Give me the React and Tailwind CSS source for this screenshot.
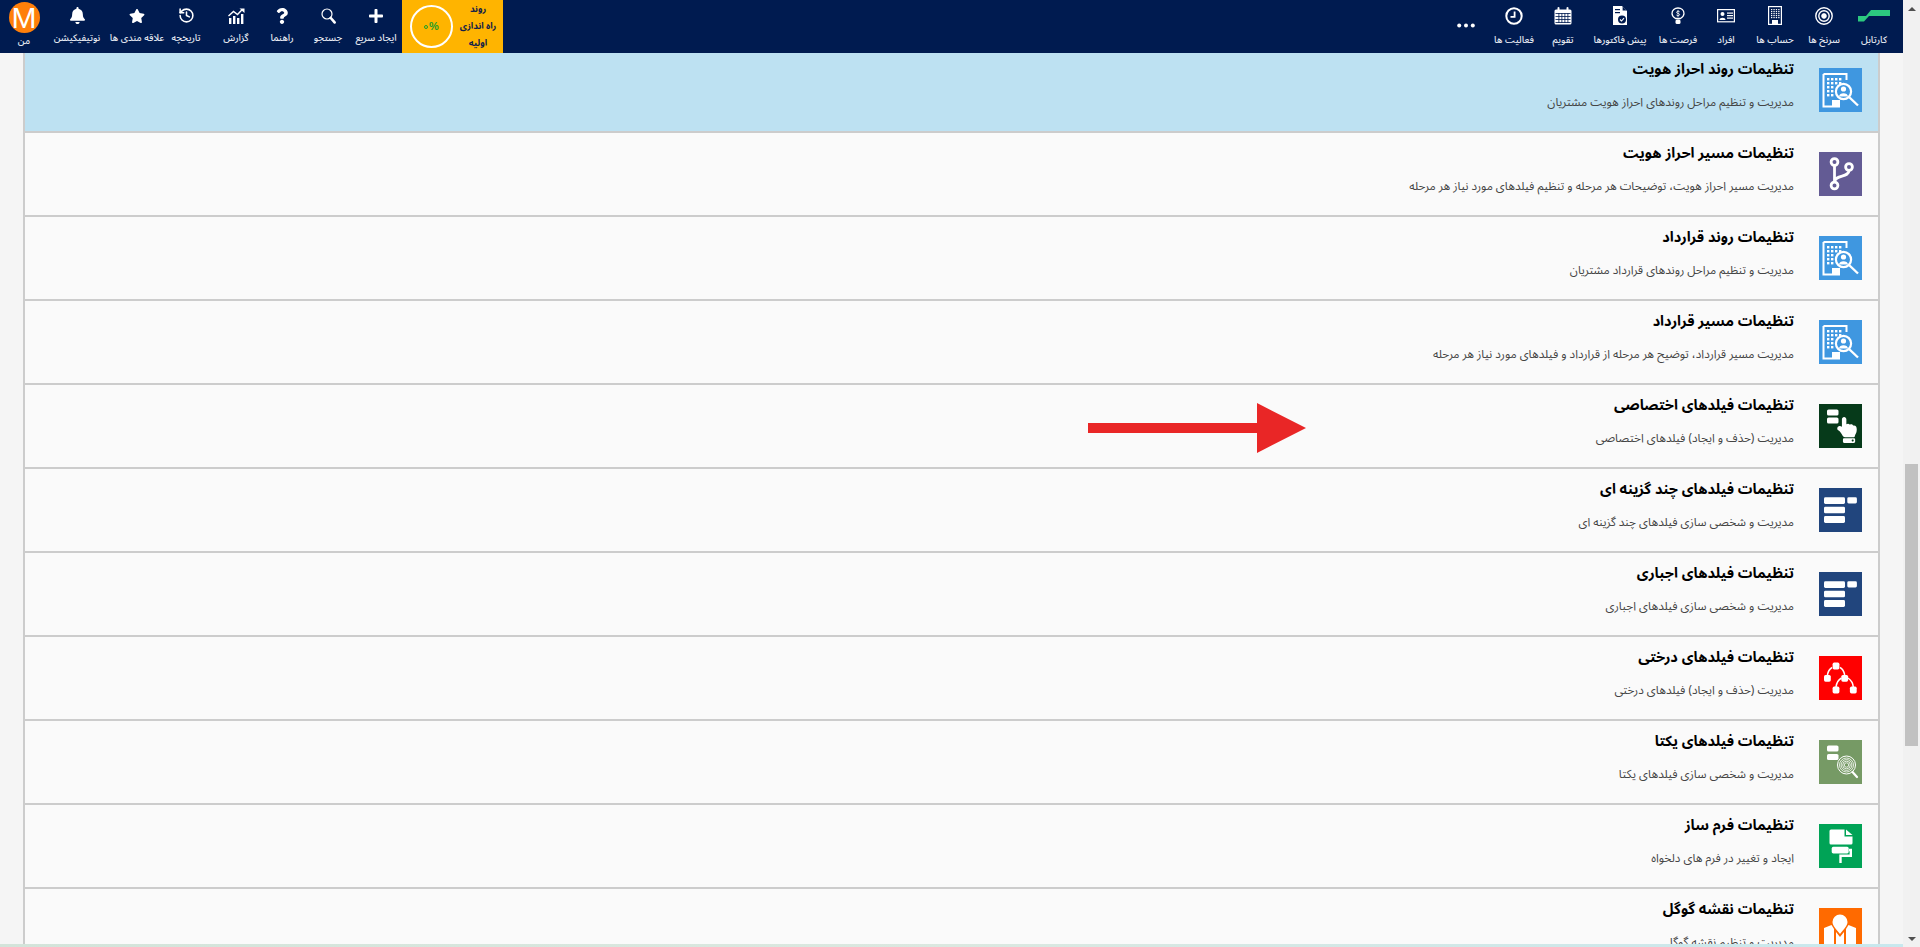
import React from "react";
import { FaPlus, FaQuestion, FaBell, FaStar, FaHandPointUp } from "react-icons/fa";
import { History } from "lucide-react";

const Logo = () => (
  <svg width="32" height="12" viewBox="0 0 32 12">
    <path d="M8 6 L13 0 H32 V6 Z" fill="#2cc97f" />
    <path d="M0 6 H11 L6 11.5 H0 Z" fill="#2cc97f" />
  </svg>
);
const Target = () => (
  <svg width="18" height="18" viewBox="0 0 18 18" fill="none" stroke="white">
    <circle cx="9" cy="9" r="8.2" strokeWidth="1.4" />
    <circle cx="9" cy="9" r="5.2" strokeWidth="1.4" />
    <circle cx="9" cy="9" r="2.4" fill="white" strokeWidth="0.8" />
  </svg>
);
const Building = () => (
  <svg width="14" height="19" viewBox="0 0 14 19">
    <rect x="0.6" y="0.6" width="12.8" height="17.8" fill="none" stroke="white" strokeWidth="1.2" />
    {[3, 5, 7, 9, 11].map((y) =>
      [3, 5.4, 7.8, 10.2].map((x) => <rect key={x + "-" + y} x={x} y={y} width="1.3" height="1.2" fill="white" />)
    )}
    <rect x="4" y="14" width="6" height="4" fill="white" />
  </svg>
);
const Card = () => (
  <svg width="18" height="14" viewBox="0 0 18 14">
    <rect x="0.6" y="0.6" width="16.8" height="12.2" fill="none" stroke="white" strokeWidth="1.2" />
    <circle cx="5.5" cy="5" r="2" fill="white" />
    <path d="M2.5 11 C2.5 8 8.5 8 8.5 11 Z" fill="white" />
    <rect x="10" y="3.5" width="6" height="1.2" fill="white" />
    <rect x="10" y="6" width="6" height="1.2" fill="white" />
    <rect x="10" y="8.5" width="6" height="1.2" fill="white" />
  </svg>
);
const Bulb = () => (
  <svg width="14" height="18" viewBox="0 0 14 18" fill="none" stroke="white">
    <path d="M4.5 11.5 C2 10 1 8.4 1 6.5 C1 3.2 3.7 1 7 1 C10.3 1 13 3.2 13 6.5 C13 8.4 12 10 9.5 11.5 Z" strokeWidth="1.3" />
    <rect x="4.5" y="12.5" width="5" height="4.5" rx="1.5" fill="white" stroke="none" />
    <path d="M8.6 4.8 C8 3.9 5.6 4 5.6 5.3 C5.6 6.8 8.6 6.1 8.6 7.6 C8.6 8.9 6 8.9 5.4 8" strokeWidth="0.9" />
    <path d="M7 3 V10" strokeWidth="0.7" />
  </svg>
);
const Invoice = () => (
  <svg width="14" height="19" viewBox="0 0 14 19">
    <path d="M0 0 H9 L14 5 V19 H0 Z" fill="white" />
    <path d="M9.6 0.4 L13.6 4.4 H9.6 Z" fill="#001b50" />
    <rect x="2" y="3" width="5" height="1.2" fill="#001b50" />
    <rect x="2" y="6" width="5" height="1.2" fill="#001b50" />
    <circle cx="9" cy="13.5" r="4" fill="#001b50" />
    <path d="M7 13.5 L8.5 15 L11 12.2" stroke="white" strokeWidth="1.1" fill="none" />
  </svg>
);
const Calendar = () => (
  <svg width="18" height="18" viewBox="0 0 18 18">
    <rect x="0.5" y="2.5" width="17" height="15" rx="1.5" fill="white" />
    <rect x="3.5" y="0" width="2" height="4" rx="1" fill="white" />
    <rect x="12.5" y="0" width="2" height="4" rx="1" fill="white" />
    {[6, 9, 12, 15].map((y) => <rect key={y} x="1.5" y={y} width="15" height="0.8" fill="#001b50" />)}
    {[4.5, 7.5, 10.5, 13.5].map((x) => <rect key={x} x={x} y="6" width="0.8" height="10" fill="#001b50" />)}
  </svg>
);
const Clock = () => (
  <svg width="18" height="18" viewBox="0 0 18 18" fill="none" stroke="white">
    <circle cx="9" cy="9" r="7.7" strokeWidth="2" />
    <path d="M9.6 4.5 V9.8 H5.5" strokeWidth="1.8" />
  </svg>
);
const Dots = () => (
  <svg width="18" height="5" viewBox="0 0 18 5" className="mt-[20px]">
    <circle cx="2.2" cy="2.5" r="2" fill="white" />
    <circle cx="9" cy="2.5" r="2" fill="white" />
    <circle cx="15.8" cy="2.5" r="2" fill="white" />
  </svg>
);
const SearchIco = () => (
  <svg width="15" height="16" viewBox="0 0 15 16" fill="none" stroke="white">
    <circle cx="6" cy="6" r="5" strokeWidth="1.2" />
    <path d="M9.8 10 L13.6 14.4" strokeWidth="2.6" strokeLinecap="round" />
  </svg>
);
const ChartIco = () => (
  <svg width="17" height="16" viewBox="0 0 17 16" fill="white">
    <rect x="1" y="10" width="2.4" height="6" />
    <rect x="5" y="8" width="2.4" height="8" />
    <rect x="9" y="10" width="2.4" height="6" />
    <rect x="13" y="6" width="2.4" height="10" />
    <path d="M0.5 8 L5.5 3.5 L9.5 6.5 L14 1.8" fill="none" stroke="white" strokeWidth="1.4" />
    <path d="M11.5 0.5 H16.5 V5 Z" />
  </svg>
);

const rightItems = [
  { w: "w-[58px]", label: "کارتابل", icon: <Logo /> },
  { w: "w-[42px]", label: "سرنخ ها", icon: <Target /> },
  { w: "w-[56px]", label: "حساب ها", icon: <Building /> },
  { w: "w-[42px]", label: "افراد", icon: <Card /> },
  { w: "w-[54px]", label: "فرصت ها", icon: <Bulb /> },
  { w: "w-[62px]", label: "پیش فاکتورها", icon: <Invoice /> },
  { w: "w-[52px]", label: "تقویم", icon: <Calendar /> },
  { w: "w-[46px]", label: "فعالیت ها", icon: <Clock /> },
  { w: "w-[50px]", label: "", icon: <Dots /> },
];

const leftItems = [
  { w: "w-[32px]", label: "ایجاد سریع", icon: <FaPlus size={16} color="white" /> },
  { w: "w-[64px]", label: "جستجو", icon: <SearchIco /> },
  { w: "w-[28px]", label: "راهنما", icon: <FaQuestion size={16} color="white" /> },
  { w: "w-[64px]", label: "گزارش", icon: <ChartIco /> },
  { w: "w-[36px]", label: "تاریخچه", icon: <History size={17} color="white" strokeWidth={2.2} /> },
  { w: "w-[62px]", label: "علاقه مندی ها", icon: <FaStar size={16} color="white" /> },
  { w: "w-[58px]", label: "نوتیفیکیشن", icon: <FaBell size={17} color="white" /> },
];

function NavItem({ w, label, icon, low }) {
  return (
    <div className={`${w} shrink-0 flex flex-col items-center`}>
      <div className="h-[31px] flex items-center justify-center">{icon}</div>
      <span className={`whitespace-nowrap text-[9.5px] font-medium leading-[18px] text-[#e4e8f0] ${low ? "" : "-mt-[2px]"}`}>{label}</span>
    </div>
  );
}

const Tile = ({ bg, children }) => (
  <div className={`w-[43px] h-[44px] shrink-0 ${bg}`}>
    <svg width="43" height="44" viewBox="0 0 43 44">{children}</svg>
  </div>
);

const BuildingSearch = () => (
  <Tile bg="bg-[#3f97e0]">
    <path d="M4.5 6 H27.5 V12 M4.5 6 V38.5 H21" fill="none" stroke="white" strokeWidth="2" />
    {[10, 14, 18, 22, 26].map((y) =>
      [8, 12, 16, 20].filter((x) => !(y > 14 && x > 12)).map((x) => <rect key={x + "-" + y} x={x} y={y} width="2.4" height="2.4" fill="white" />)
    )}
    <rect x="13" y="32" width="8" height="6" fill="white" />
    <circle cx="24.5" cy="23.5" r="7.6" fill="none" stroke="white" strokeWidth="2.2" />
    <circle cx="24.5" cy="21" r="2.6" fill="white" />
    <path d="M20 28.5 C20 24 29 24 29 28.5 Z" fill="white" />
    <path d="M30 29 L39 37.5" stroke="white" strokeWidth="2.4" />
  </Tile>
);
const Branch = () => (
  <Tile bg="bg-[#635b94]">
    <g fill="none" stroke="white" strokeWidth="2.8">
      <circle cx="15.5" cy="10" r="3.4" />
      <circle cx="30" cy="15" r="3.4" />
      <circle cx="15.5" cy="33.5" r="3.4" />
      <path d="M15.5 13.5 V30 M30 18.5 C30 26 16 22 15.5 30" />
    </g>
  </Tile>
);
const Hand = () => (
  <div className="w-[43px] h-[44px] shrink-0 bg-[#063a1a] relative">
    <svg width="43" height="44" viewBox="0 0 43 44">
      <rect x="8" y="5.5" width="11.5" height="6" rx="1.6" fill="white" />
      <rect x="8" y="13.5" width="11.5" height="6" rx="1.6" fill="white" />
    </svg>
    <FaHandPointUp size={26} color="white" className="absolute left-[15px] top-[13px]" />
  </div>
);
const ListForm = () => (
  <Tile bg="bg-[#21457d]">
    <rect x="5" y="9.3" width="21" height="6.6" rx="1.4" fill="white" />
    <rect x="5" y="18.7" width="21" height="6.6" rx="1.4" fill="white" />
    <rect x="5" y="28" width="21" height="7" rx="1.4" fill="white" />
    <rect x="28.3" y="9.3" width="9.6" height="6.2" rx="1.4" fill="white" />
  </Tile>
);
const Tree = () => (
  <Tile bg="bg-[#ff0000]">
    <path d="M13 11.5 C10.5 13 9 15.5 8.4 19 M21 11.5 C23 12.5 25 15.5 25.7 19 M22.5 22 C19 24 17.5 27 17 31 M29 22 C32 24 34 27 34.3 31" fill="none" stroke="white" strokeWidth="1.5" />
    {[[17, 10], [8.4, 22.3], [25.7, 22.3], [17, 34], [34.3, 34]].map(([x, y]) => (
      <rect key={x + "-" + y} x={x - 3.4} y={y - 3.4} width="6.8" height="6.8" rx="1.6" fill="white" />
    ))}
  </Tile>
);
const Finger = () => (
  <Tile bg="bg-[#769a65]">
    <rect x="8" y="5.5" width="11.5" height="6" rx="1.6" fill="white" />
    <rect x="8" y="14" width="11.5" height="6" rx="1.6" fill="white" />
    <g fill="none" stroke="white" strokeWidth="0.8">
      <circle cx="27.5" cy="25" r="9" strokeWidth="1" />
      <circle cx="27.5" cy="25" r="7" />
      <circle cx="27.5" cy="25" r="5.4" />
      <circle cx="27.5" cy="25" r="3.8" />
      <circle cx="27.5" cy="25" r="2.2" />
    </g>
    <path d="M33.5 32 L38 37" stroke="white" strokeWidth="2.2" strokeLinecap="round" />
  </Tile>
);
const Roller = () => (
  <Tile bg="bg-[#00a356]">
    <path d="M10.5 7 A1.5 1.5 0 0 1 12 5.5 H25.5 V12.5 H33.5 V19 A1.5 1.5 0 0 1 32 20.5 H12 A1.5 1.5 0 0 1 10.5 19 Z" fill="white" />
    <path d="M27 5.5 L33.5 11 H27 Z" fill="white" />
    <rect x="12.7" y="22.8" width="17" height="6.6" rx="1.6" fill="white" />
    <path d="M30 26 H31.8 V31.8 H21.5 V39" fill="none" stroke="white" strokeWidth="2.4" />
  </Tile>
);
const MapIco = () => (
  <Tile bg="bg-[#ff6a00]">
    <path d="M21 6.5 A7.5 7.5 0 0 1 28.5 14 C28.5 18 24 22 21 26 C18 22 13.5 18 13.5 14 A7.5 7.5 0 0 1 21 6.5 Z" fill="white" />
    <path d="M5 20 L12.5 17 L15 21 V40 L5 43 Z M17 24 L21 29 L25 24 V42 L17 40 Z M27 21 L29.5 17 L37 20 V42 L27 40 Z" fill="white" />
  </Tile>
);

const rows = [
  { t: "تنظیمات روند احراز هویت", d: "مدیریت و تنظیم مراحل روندهای احراز هویت مشتریان", i: <BuildingSearch />, active: true },
  { t: "تنظیمات مسیر احراز هویت", d: "مدیریت مسیر احراز هویت، توضیحات هر مرحله و تنظیم فیلدهای مورد نیاز هر مرحله", i: <Branch /> },
  { t: "تنظیمات روند قرارداد", d: "مدیریت و تنظیم مراحل روندهای قرارداد مشتریان", i: <BuildingSearch /> },
  { t: "تنظیمات مسیر قرارداد", d: "مدیریت مسیر قرارداد، توضیح هر مرحله از قرارداد و فیلدهای مورد نیاز هر مرحله", i: <BuildingSearch /> },
  { t: "تنظیمات فیلدهای اختصاصی", d: "مدیریت (حذف و ایجاد) فیلدهای اختصاصی", i: <Hand />, arrow: true },
  { t: "تنظیمات فیلدهای چند گزینه ای", d: "مدیریت و شخصی سازی فیلدهای چند گزینه ای", i: <ListForm /> },
  { t: "تنظیمات فیلدهای اجباری", d: "مدیریت و شخصی سازی فیلدهای اجباری", i: <ListForm /> },
  { t: "تنظیمات فیلدهای درختی", d: "مدیریت (حذف و ایجاد) فیلدهای درختی", i: <Tree /> },
  { t: "تنظیمات فیلدهای یکتا", d: "مدیریت و شخصی سازی فیلدهای یکتا", i: <Finger /> },
  { t: "تنظیمات فرم ساز", d: "ایجاد و تغییر در فرم های دلخواه", i: <Roller /> },
  { t: "تنظیمات نقشه گوگل", d: "مدیریت و تنظیم نقشه گوگل", i: <MapIco /> },
];

export default function App() {
  return (
    <div className="h-[947px] w-full flex overflow-hidden relative font-['Noto_Sans_Arabic','DejaVu_Sans',sans-serif]">
      <div className="w-[1903px] shrink-0 flex flex-col h-full">
        <header className="h-[53px] shrink-0 bg-[#001b50] flex justify-between relative z-10">
          <div className="flex">
            <div className="w-[48px] shrink-0 flex flex-col items-center">
              <div className="mt-[2px] w-[31px] h-[31px] rounded-full bg-[#ff7f0a] flex items-center justify-center text-white text-[30px] leading-none font-['Liberation_Sans',sans-serif]">M</div>
              <span className="text-[9.5px] font-medium leading-[16px] text-[#e4e8f0]">من</span>
            </div>
            {[...leftItems].reverse().map((it) => <NavItem key={it.label} {...it} />)}
            <div className="ml-[10px] w-[101px] bg-[#ffb400] flex items-center pl-[8px]">
              <div className="w-[43px] h-[43px] rounded-full border-2 border-white flex items-center justify-center gap-[1px] text-[#1e9e28] font-bold text-[11px] font-['Liberation_Sans',sans-serif]">
                <span className="w-[4px] h-[4px] rounded-full border border-[#1e9e28]" />
                <span>%</span>
              </div>
              <div className="flex-1 flex flex-col items-center text-[#10204a] font-bold text-[9px] leading-[17px] whitespace-nowrap" dir="rtl">
                <span>روند</span>
                <span>راه اندازی</span>
                <span>اولیه</span>
              </div>
            </div>
          </div>
          <div className="flex flex-row-reverse">
            {rightItems.map((it) => <NavItem key={it.w + it.label} {...it} low />)}
          </div>
        </header>
        <main className="flex-1 min-h-0 overflow-hidden bg-[#f5f5f5] px-[23px]">
          <div className="-mt-[4px] border-x-2 border-[#cccccc]">
            {rows.map((r) => (
              <div key={r.t} dir="rtl" className={`relative h-[84px] border-b-2 border-[#cccccc] flex pr-[16px] pt-[19px] gap-[25px] ${r.active ? "bg-[#bde1f2]" : "bg-[#fafafa]"}`}>
                {r.i}
                <div className="-mt-[19px] flex flex-col">
                  <div className="mt-[11px] text-[14.5px] leading-[20px] font-bold text-black whitespace-nowrap">{r.t}</div>
                  <div className="mt-[13px] text-[11.75px] leading-[20px] text-[#444444] whitespace-nowrap">{r.d}</div>
                </div>
                {r.arrow && (
                  <svg width="218" height="50" viewBox="0 0 218 50" className="absolute left-[1063px] top-[18px]">
                    <path d="M0 20 H169 V0 L218 25 L169 50 V30 H0 Z" fill="#e92626" />
                  </svg>
                )}
              </div>
            ))}
          </div>
        </main>
        <div className="h-[3px] shrink-0 bg-gradient-to-r from-[#d3e4da] via-[#dbe8e0] to-[#c8e8ee]" />
      </div>
      <aside className="w-[17px] shrink-0 h-full bg-[#f1f1f1] flex flex-col items-center">
        <div className="h-[17px] flex items-center justify-center">
          <div className="w-0 h-0 border-x-[4px] border-x-transparent border-b-[4px] border-b-[#505050]" />
        </div>
        <div className="w-[13px] h-[282px] mt-[447px] bg-[#c1c1c1]" />
        <div className="mt-auto h-[17px] flex items-center justify-center">
          <div className="w-0 h-0 border-x-[4px] border-x-transparent border-t-[4px] border-t-[#505050]" />
        </div>
      </aside>
    </div>
  );
}
